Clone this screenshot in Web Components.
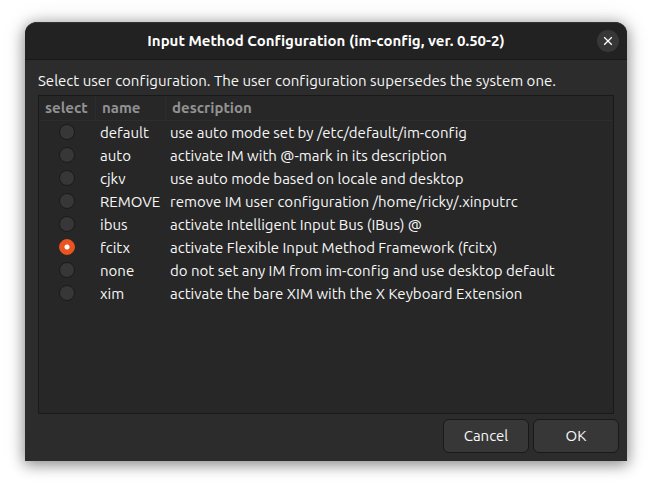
<!DOCTYPE html>
<html lang="en">
<head>
<meta charset="utf-8">
<meta name="viewport" content="width=device-width, initial-scale=1">
<title>Input Method Configuration</title>
<style>
  body {
    margin: 0;
    min-height: 100vh;
    box-sizing: border-box;
    padding: 22px 25px 28px;
    display: flex;
    background: #fff;
    color: #f7f7f7;
    font: 15px/23px Ubuntu, "Noto Sans", sans-serif;
    font-variant-ligatures: none;
  }
  im-dialog { flex: 1; }
</style>
</head>
<body>
<im-dialog>
  <im-titlebar slot="title">Input Method Configuration (im-config, ver. 0.50-2)</im-titlebar>
  <span slot="message">Select user configuration. The user configuration supersedes the system one.</span>
  <im-choice-list value="fcitx">
    <im-choice name="default">use auto mode set by /etc/default/im-config</im-choice>
    <im-choice name="auto">activate IM with @-mark in its description</im-choice>
    <im-choice name="cjkv">use auto mode based on locale and desktop</im-choice>
    <im-choice name="REMOVE">remove IM user configuration /home/ricky/.xinputrc</im-choice>
    <im-choice name="ibus">activate Intelligent Input Bus (IBus) @</im-choice>
    <im-choice name="fcitx">activate Flexible Input Method Framework (fcitx)</im-choice>
    <im-choice name="none">do not set any IM from im-config and use desktop default</im-choice>
    <im-choice name="xim">activate the bare XIM with the X Keyboard Extension</im-choice>
  </im-choice-list>
  <im-button slot="actions">Cancel</im-button>
  <im-button slot="actions">OK</im-button>
</im-dialog>

<script>
  const define = (tag, html, setup) => {
    const template = document.createElement("template");
    template.innerHTML = html;
    customElements.define(tag, class extends HTMLElement {
      constructor() {
        super();
        this.attachShadow({ mode: "open" }).append(template.content.cloneNode(true));
      }
      connectedCallback() {
        if (setup) setup(this, this.shadowRoot);
      }
    });
  };

  define("im-dialog", `
    <style>
      :host {
        display: flex;
        flex-direction: column;
        box-sizing: border-box;
        min-width: 0;
        border-radius: 12px 12px 0 0;
        background: #2c2c2c;
        box-shadow: 0 3px 14px 1px rgba(0, 0, 0, .4), 0 0 24px rgba(0, 0, 0, .12);
      }
      main {
        flex: 1;
        display: flex;
        flex-direction: column;
        padding: 9px 13px 5px;
      }
      p { margin: 0 0 3px; }
      footer {
        display: flex;
        justify-content: flex-end;
        gap: 4px;
        padding: 0 8px 8px;
      }
    </style>
    <slot name="title"></slot>
    <main>
      <p><slot name="message"></slot></p>
      <slot></slot>
    </main>
    <footer><slot name="actions"></slot></footer>`);

  define("im-titlebar", `
    <style>
      :host {
        display: grid;
        grid-template-columns: 22px 1fr 22px;
        align-items: center;
        box-sizing: border-box;
        height: 38px;
        padding: 0 8px;
        border-top: 1px solid #333;
        border-bottom: 1px solid #191919;
        border-radius: 12px 12px 0 0;
        background: #222;
      }
      h1 {
        grid-column: 2;
        margin: 0;
        font: inherit;
        font-weight: 700;
        line-height: 22px;
        text-align: center;
        color: #fff;
      }
      button {
        display: grid;
        place-items: center;
        width: 22px;
        height: 22px;
        padding: 0;
        border: 0;
        border-radius: 50%;
        background: #373737;
      }
      svg { width: 10px; height: 10px; }
    </style>
    <h1><slot></slot></h1>
    <button type="button" aria-label="Close">
      <svg viewBox="0 0 10 10" fill="none" stroke="#fff" stroke-width="1.3"><path d="M1.2 1.2 8.8 8.8M8.8 1.2 1.2 8.8"/></svg>
    </button>`);

  define("im-button", `
    <style>
      :host { display: block; }
      button {
        display: block;
        width: 86px;
        height: 34px;
        padding: 0 8px 1px;
        border: 1px solid #191919;
        border-radius: 6px;
        background: #373737;
        color: inherit;
        font: inherit;
      }
    </style>
    <button type="button"><slot></slot></button>`);

  define("im-choice", `<slot></slot>`);

  define("im-choice-list", `
    <style>
      :host {
        flex: 1;
        display: block;
        border: 1px solid #191919;
        background: #272727;
      }
      table {
        width: 100%;
        table-layout: fixed;
        border-collapse: separate;
        border-spacing: 0;
      }
      .select { width: 57px; }
      .name { width: 70px; }
      th, td {
        box-sizing: border-box;
        padding: 0 4px;
        text-align: left;
        white-space: nowrap;
      }
      th {
        height: 25px;
        padding: 0 6px 1px;
        border-right: 1px solid #2d2d2d;
        border-bottom: 1px solid #2d2d2d;
        color: #929292;
        line-height: 22px;
      }
      th:last-child { border-right: 0; }
      td { height: 23px; }
      td:first-child { padding: 0 1px 1px 0; }
      input {
        appearance: none;
        display: block;
        box-sizing: border-box;
        width: 16px;
        height: 16px;
        margin: 0 auto;
        border: 1px solid #1b1b1b;
        border-radius: 50%;
        background: #373737;
      }
      input:checked {
        border-color: #e95420;
        background: radial-gradient(circle, #fff 2px, #e95420 3px) border-box;
      }
    </style>
    <table>
      <colgroup><col class="select"><col class="name"><col></colgroup>
      <thead><tr><th>select</th><th>name</th><th>description</th></tr></thead>
      <tbody></tbody>
    </table>`,
    (host, root) => {
      const body = root.querySelector("tbody");
      body.replaceChildren(...[...host.querySelectorAll("im-choice")].map(choice => {
        const name = choice.getAttribute("name");
        const row = document.createElement("tr");
        row.innerHTML = `<td><input type="radio" name="method"></td><td><label></label></td><td></td>`;
        const input = row.querySelector("input");
        const label = row.querySelector("label");
        input.id = label.htmlFor = "method-" + name;
        input.value = label.textContent = name;
        input.checked = name === host.getAttribute("value");
        row.lastElementChild.textContent = choice.textContent;
        return row;
      }));
    });
</script>
</body>
</html>
